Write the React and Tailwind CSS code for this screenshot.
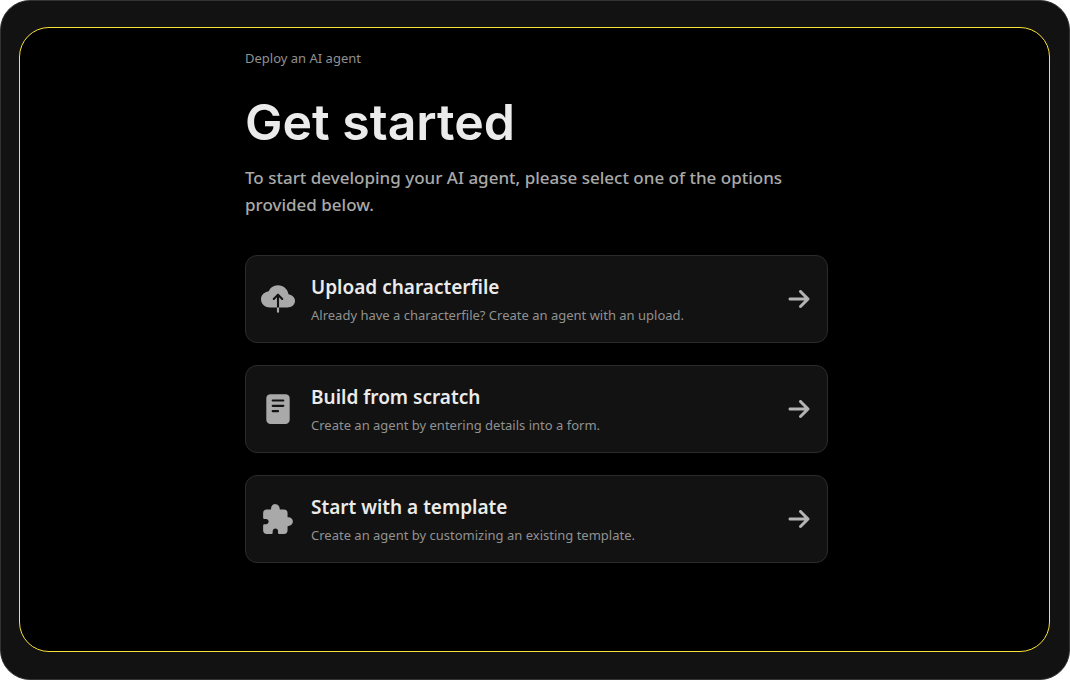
import { IoCloudUpload, IoReader, IoExtensionPuzzle } from "react-icons/io5";
import { FaArrowRight } from "react-icons/fa6";

const options = [
  {
    icon: IoCloudUpload,
    title: "Upload characterfile",
    description: "Already have a characterfile? Create an agent with an upload.",
  },
  {
    icon: IoReader,
    title: "Build from scratch",
    description: "Create an agent by entering details into a form.",
  },
  {
    icon: IoExtensionPuzzle,
    title: "Start with a template",
    description: "Create an agent by customizing an existing template.",
  },
];

function OptionCard({ icon: Icon, title, description }) {
  return (
    <button
      type="button"
      className="flex h-[88px] w-full cursor-pointer items-center rounded-xl border border-[#2b2b2b] bg-[#121212] pr-4 pl-[15px] text-left hover:bg-[#1a1a1a]"
    >
      <Icon className="size-[34px] shrink-0 text-[#a9a9a9]" aria-hidden="true" />
      <span className="ml-4 flex min-w-0 flex-1 flex-col">
        <span className="text-[19px] leading-8 font-semibold text-[#ebebeb]">{title}</span>
        <span className="text-[13px] leading-6 text-[#919191]">{description}</span>
      </span>
      <FaArrowRight className="size-6 shrink-0 text-[#b3b3b3]" aria-hidden="true" />
    </button>
  );
}

export default function App() {
  return (
    <div className="min-h-screen bg-white font-['Noto_Sans',sans-serif]">
      <div className="flex min-h-screen flex-col rounded-[30px] border border-[#333333] bg-[#121212] pt-[26px] pr-[19px] pb-[27px] pl-[18px]">
        <main className="flex flex-1 flex-col rounded-[30px] border border-[#fbe23a] bg-black pt-[18px] pr-5 pl-6">
          <div className="mx-auto w-full max-w-[583px]">
            <p className="text-[13px] leading-6 text-[#919191]">Deploy an AI agent</p>
            <h1 className="mt-[22px] font-[Inter,sans-serif] text-[50px] leading-[60px] font-semibold text-[#ebebeb]">
              Get started
            </h1>
            <p className="mt-3 text-[17px] leading-[27px] font-medium text-[#a9a9a9]">
              To start developing your AI agent, please select one of the options provided below.
            </p>
            <div className="mt-[37px] flex flex-col gap-[22px]">
              {options.map((option) => (
                <OptionCard key={option.title} {...option} />
              ))}
            </div>
          </div>
        </main>
      </div>
    </div>
  );
}
